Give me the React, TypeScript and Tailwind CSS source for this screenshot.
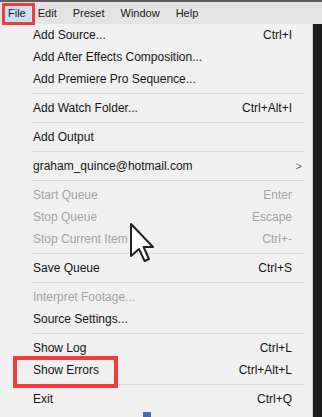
import React from "react";

type Item =
  | { kind: "item"; label: string; shortcut?: string; disabled?: boolean; submenu?: boolean }
  | { kind: "sep" };

const items: Item[] = [
  { kind: "item", label: "Add Source...", shortcut: "Ctrl+I" },
  { kind: "item", label: "Add After Effects Composition..." },
  { kind: "item", label: "Add Premiere Pro Sequence..." },
  { kind: "sep" },
  { kind: "item", label: "Add Watch Folder...", shortcut: "Ctrl+Alt+I" },
  { kind: "sep" },
  { kind: "item", label: "Add Output" },
  { kind: "sep" },
  { kind: "item", label: "graham_quince@hotmail.com", submenu: true },
  { kind: "sep" },
  { kind: "item", label: "Start Queue", shortcut: "Enter", disabled: true },
  { kind: "item", label: "Stop Queue", shortcut: "Escape", disabled: true },
  { kind: "item", label: "Stop Current Item", shortcut: "Ctrl+-", disabled: true },
  { kind: "sep" },
  { kind: "item", label: "Save Queue", shortcut: "Ctrl+S" },
  { kind: "sep" },
  { kind: "item", label: "Interpret Footage...", disabled: true },
  { kind: "item", label: "Source Settings..." },
  { kind: "sep" },
  { kind: "item", label: "Show Log", shortcut: "Ctrl+L" },
  { kind: "item", label: "Show Errors", shortcut: "Ctrl+Alt+L" },
  { kind: "sep" },
  { kind: "item", label: "Exit", shortcut: "Ctrl+Q" },
];

const menus = ["Edit", "Preset", "Window", "Help"];

export default function App() {
  return (
    <div
      className="relative flex h-[417px] w-[322px] flex-col overflow-hidden bg-[#1c1c1c] text-[12px]"
      style={{ fontFamily: '"Liberation Sans", Arial, sans-serif' }}
    >
      {/* menu bar */}
      <div className="flex h-[24px] shrink-0 flex-col bg-[#e3e3e3]">
        <div className="h-[2px] bg-[#5c5c5c]" />
        <div className="flex flex-1 items-center text-[11px] text-[#1a1a1a]">
          <span className="ml-[3px] flex h-full items-center bg-[#c9dff2] px-[5px]">File</span>
          <div className="ml-[7px] flex gap-[16px]">
            {menus.map((m) => (
              <span key={m}>{m}</span>
            ))}
          </div>
        </div>
      </div>

      <div className="flex flex-1">
        {/* dropdown panel */}
        <div className="flex w-[313px] flex-col border-r border-[#cfcfcf] bg-[#f0f0f0] pb-[8px]">
          {items.map((it, i) =>
            it.kind === "sep" ? (
              <div key={i} className="flex h-[7px] items-center pl-[32px] pr-[8px]">
                <div className="h-px w-full bg-[#d9d9d9]" />
              </div>
            ) : (
              <div
                key={i}
                className={`flex h-[22px] items-center pl-[33px] pr-[20px] ${
                  it.disabled ? "text-[#a3a3a3]" : "text-[#151515]"
                }`}
              >
                <span className="flex-1">{it.label}</span>
                {it.shortcut && <span>{it.shortcut}</span>}
                {it.submenu && <span className="mr-[-10px] text-[11px] text-[#666]">&gt;</span>}
              </div>
            )
          )}
        </div>
        <div className="flex-1" />
      </div>
      <div className="h-[6px] shrink-0" />

      {/* annotation boxes */}
      <div className="absolute left-[2px] top-[3px] h-[22px] w-[33px] border-[3px] border-[#ef3d3d]" />
      <div className="absolute left-[13px] top-[356px] h-[32px] w-[105px] border-[4px] border-[#ef3d3d]" />

      {/* cursor */}
      <svg
        className="absolute left-[129px] top-[222px]"
        width="26"
        height="42"
        viewBox="-1 -1 13 21"
      >
        <path
          d="M0 0 L0 16 L4 12.5 L6.8 18.5 L9 17.5 L6.3 11.5 L11 11.5 Z"
          fill="#fff"
          stroke="#222"
          strokeWidth="1"
          strokeLinejoin="round"
        />
      </svg>

      {/* bit of blue at bottom */}
      <div className="absolute left-[143px] top-[412px] h-[5px] w-[8px] bg-[#4a68b0]" />
    </div>
  );
}
